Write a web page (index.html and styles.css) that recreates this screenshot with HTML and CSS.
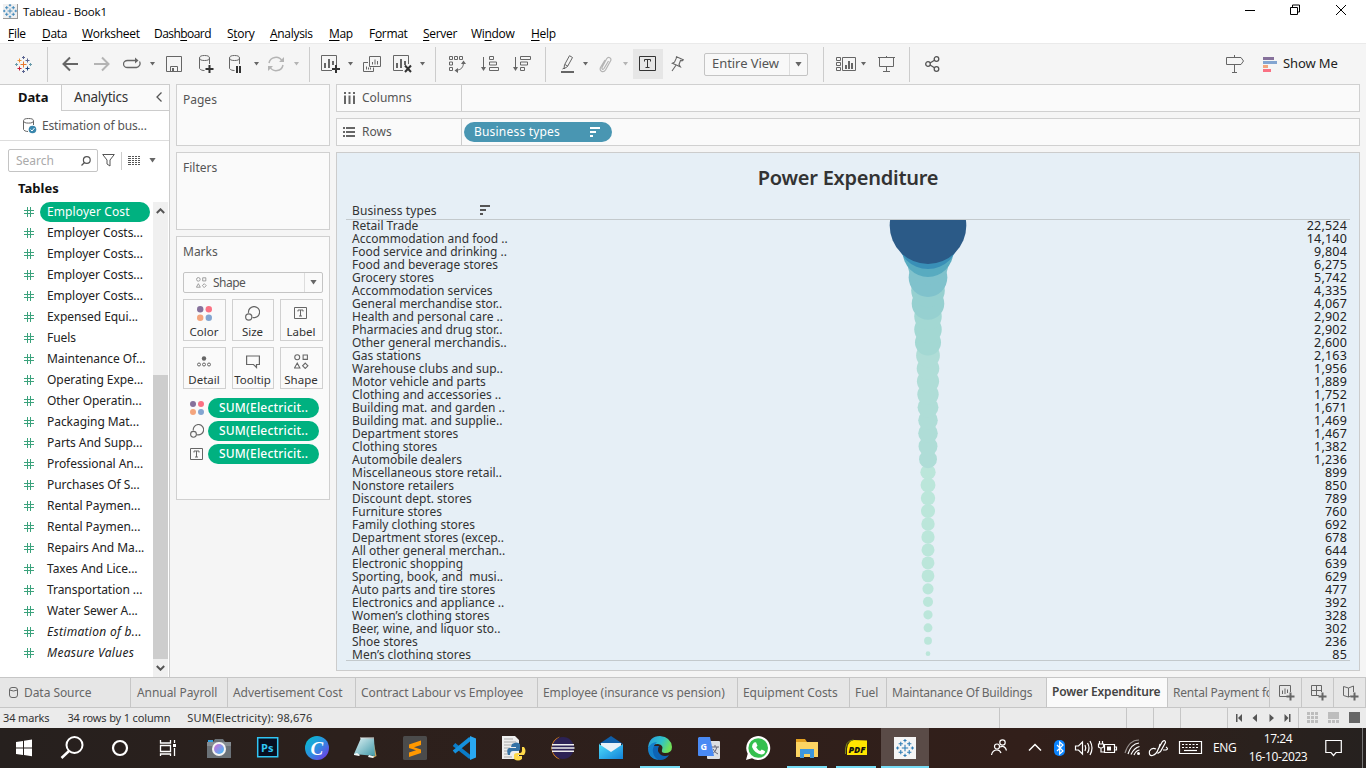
FILE: index.html
```html
<!DOCTYPE html>
<html lang="en">
<head>
<meta charset="utf-8">
<title>Tableau - Book1</title>
<link rel="stylesheet" href="styles.css">
</head>
<body>
<svg class="defs" width="0" height="0">
  <defs>
    <symbol id="caret" viewBox="0 0 5 4"><path d="M0 0h5L2.500 3.500z" fill="currentColor"/></symbol>
    <symbol id="hash" viewBox="0 0 10 10"><path d="M3.500 0v10M6.500 0v10M0 3.500h10M0 6.500h10" stroke="#3ba27c" fill="none"/></symbol>
    <symbol id="dots" viewBox="0 0 14 14"><circle cx="3" cy="3" r="3" fill="#86719b"/><circle cx="11" cy="3" r="3" fill="#fa7183"/><circle cx="3" cy="11" r="3" fill="#f4a57d"/><circle cx="11" cy="11" r="3" fill="#83a5d1"/></symbol>
    <symbol id="size" viewBox="0 0 14 14"><path d="M3.300 6.500A5.200 5.200 0 1 1 7 10.700" fill="none" stroke="#666" stroke-width="1.100"/><circle cx="3.500" cy="10.300" r="2.900" fill="none" stroke="#666" stroke-width="1.100"/></symbol>
    <symbol id="tbox" viewBox="0 0 14 13"><path d="M.5.5h12v11H.5zM4 4.500V3h5v1.500M6.500 3v6M5 9h3" fill="none" stroke="#666"/></symbol>
    <symbol id="shapes" viewBox="0 0 14 14"><circle cx="3" cy="3" r="2.300"/><path d="M8.500 1h4v4h-4zM3 8.500l2.500 4.500h-5zM10.500 8.500l2.500 2.500-2.500 2.500L8 11z"/></symbol>
    <symbol id="logo" viewBox="0 0 17 17"><g fill="none"><path d="M8.500 5.500v6M5.500 8.500h6" stroke="var(--a)"/><path d="M4.500 2.500v4M2.500 4.500h4" stroke="var(--b)"/><path d="M12.500 2.500v4M10.500 4.500h4" stroke="var(--c)"/><path d="M4.500 10.500v4M2.500 12.500h4" stroke="var(--d)"/><path d="M12.500 10.500v4M10.500 12.500h4" stroke="var(--e)"/><path d="M8.500 0v3M7 1.500h3M8.500 14v3M7 15.500h3" stroke="var(--c)"/><path d="M1.500 7v3M0 8.500h3M15.500 7v3M14 8.500h3" stroke="var(--f)"/></g></symbol>
    <symbol id="sortdesc" viewBox="0 0 10 10"><path d="M0 1h10M0 5h6M0 9h3" stroke="currentColor" stroke-width="2"/></symbol>
    <linearGradient id="gcanva" x1="0" y1="0" x2="1" y2="1"><stop offset="0" stop-color="#00c4cc"/><stop offset=".5" stop-color="#2d8fe0"/><stop offset="1" stop-color="#7d2ae8"/></linearGradient>
    <linearGradient id="gcam" x1="0" y1="0" x2="1" y2="1"><stop offset="0" stop-color="#d66ad8"/><stop offset="1" stop-color="#39c0f5"/></linearGradient>
    <linearGradient id="gedge" x1="0" y1="0" x2="1" y2=".4"><stop offset="0" stop-color="#2a9be0"/><stop offset=".6" stop-color="#2fc2c9"/><stop offset="1" stop-color="#6fe05a"/></linearGradient>
    <linearGradient id="gmail" x1="0" y1="0" x2="1" y2="1"><stop offset="0" stop-color="#4fdcfa"/><stop offset="1" stop-color="#1283d9"/></linearGradient>
    <linearGradient id="gnote" x1="0" y1="0" x2="1" y2="1"><stop offset="0" stop-color="#dff3f5"/><stop offset="1" stop-color="#3f98a8"/></linearGradient>
  </defs>
</svg>

<header class="titlebar">
  <span class="app-icon"><svg class="logo blue" width="14" height="14"><use href="#logo"/></svg></span>
  <span class="app-title">Tableau - Book1</span>
  <svg class="winbtns" width="116" height="20" viewBox="0 0 116 20" fill="none" stroke="#000"><path d="M0 10.500h10M45.500 7.500h7v7h-7zM47.500 7v-2h7v7H53M91 5l10 10M101 5L91 15"/></svg>
</header>

<nav class="menubar">
  <span class="m1"><u>F</u>ile</span><span class="m2"><u>D</u>ata</span><span class="m3"><u>W</u>orksheet</span><span class="m4">Dash<u>b</u>oard</span><span class="m5">S<u>t</u>ory</span><span class="m6"><u>A</u>nalysis</span><span class="m7"><u>M</u>ap</span><span class="m8">F<u>o</u>rmat</span><span class="m9"><u>S</u>erver</span><span class="m10">Wi<u>n</u>dow</span><span class="m11"><u>H</u>elp</span>
</nav>

<div class="toolbar">
  <div class="group g-logo"><svg class="logo multi" width="17" height="17"><use href="#logo"/></svg></div>
  <div class="group g-edit">
    <svg width="16" height="16" fill="none" stroke="#666" stroke-width="2"><path d="M16 8H1.500M8 1.500L1.500 8 8 14.500"/></svg>
    <svg class="s16" width="16" height="16" fill="none" stroke="#b4b4b4" stroke-width="2"><path d="M0 8h14.500M8 1.500L14.500 8 8 14.500"/></svg>
    <svg class="s13" width="18" height="16" fill="none" stroke="#666" stroke-width="1.300"><path d="M12.500 4.500H4.500a4 3.500 0 0 0 0 7h9a4 4 0 0 0 3-6"/><path d="M12 1.500l3.500 3-3.500 3z" fill="#666" stroke="none"/></svg>
    <svg class="caret s9" width="5" height="4"><use href="#caret"/></svg>
    <svg class="s11" width="16" height="16" fill="none" stroke="#666"><path d="M.5.5h15v15H.500zM4.500 15v-4.500h7v4.500"/><path d="M6 12h2v3H6z" fill="#666" stroke="none"/></svg>
    <svg class="s17" width="15" height="18" fill="none" stroke="#666"><path d="M.5 3v10.500c1 1.500 3 2 5 2M10.500 3v6"/><ellipse cx="5.500" cy="3" rx="5" ry="2.500"/><path d="M10.500 10v8M6.500 14h8" stroke="#333" stroke-width="2"/></svg>
    <svg class="s15" width="14" height="18" fill="none" stroke="#666"><path d="M.5 3v10.500c1 1.500 3 2 5 2M10.500 3v6"/><ellipse cx="5.500" cy="3" rx="5" ry="2.500"/><path d="M8 11v7M11 11v7" stroke="#333" stroke-width="2"/></svg>
    <svg class="caret s11" width="5" height="4"><use href="#caret"/></svg>
    <svg class="s8" width="18" height="16" fill="none" stroke="#b4b4b4" stroke-width="1.500"><path d="M2 7a7 7 0 0 1 13-2M16 9a7 7 0 0 1-13 2"/><path d="M12 6h5V1zM6 10H1v5z" fill="#b4b4b4" stroke="none"/></svg>
    <svg class="caret dim s9" width="5" height="4"><use href="#caret"/></svg>
  </div>
  <div class="group g-sheet">
    <svg width="19" height="18" fill="none" stroke="#666"><path d="M11 15.500H.5V.5h15V10"/><path d="M4 13V8M8 13V4M12 10V6" stroke-width="2"/><path d="M15 10v8M11 14h8" stroke="#333" stroke-width="2"/></svg>
    <svg class="caret s8" width="5" height="4"><use href="#caret"/></svg>
    <svg class="s10" width="18" height="17" fill="none" stroke="#666"><path d="M6.500.5h11v10h-11zM5 6.500H.5v9h10v-4M9.500 8.500V6M12 8.500V3.500M14.500 8.500V5M3.500 13.500v-3M5.500 13.500v-2M7.500 13.500v-2"/></svg>
    <svg class="s12" width="20" height="18" fill="none" stroke="#666"><path d="M10 15.500H.5V.5h15V9"/><path d="M4 13V8M8 13V4M12 10V6" stroke-width="2"/><path d="M12 10.500l6 6.500M18 10.500L12 17" stroke="#333" stroke-width="2"/></svg>
    <svg class="caret s7" width="5" height="4"><use href="#caret"/></svg>
  </div>
  <div class="group g-sort">
    <svg width="18" height="17" fill="none" stroke="#666"><path d="M.5.5h3v3h-3zM5.500.5h3v3h-3zM10.500.5h3v3h-3zM.5 6h3v3h-3zM.5 11.500h3v3h-3zM14.500 6c0 5-2 8-7 8"/><path d="M12 8l2.500-3.500L17 8zM9 12l-3.500 2.500L9 17z" fill="#666" stroke="none"/></svg>
    <svg class="s14" width="19" height="16" fill="none" stroke="#666"><path d="M2.500 1v12M8.500.5h4v3h-4zM8.500 6h7v3h-7zM8.500 11.500h9v3h-9z"/><path d="M0 11l2.500 4L5 11z" fill="#666" stroke="none"/></svg>
    <svg class="s13" width="19" height="16" fill="none" stroke="#666"><path d="M2.500 1v12M7.500.5h10v3h-10zM7.500 6h7v3h-7zM7.500 11.500h4v3h-4z"/><path d="M0 11l2.500 4L5 11z" fill="#666" stroke="none"/></svg>
  </div>
  <div class="group g-mark">
    <svg width="14" height="18" fill="none" stroke="#666"><path d="M0 17h13" stroke-width="2"/><path d="M8.500.7l3 1.800-5 9-3.500 2.300.5-4zM4 9.500l3 1.800M1.500 14l2-1"/></svg>
    <svg class="caret s8" width="5" height="4"><use href="#caret"/></svg>
    <svg class="s11" width="13" height="17" fill="none" stroke="#b4b4b4" stroke-width="1.200"><path d="M9.500 5L5 12.500c-1 1.500-2.500.500-2-1L7.500 3c2-3 5.500-1 4 2L6.500 14c-2 3-6.500 1.500-5-2.500L6 4"/></svg>
    <svg class="caret dim s11" width="5" height="4"><use href="#caret"/></svg>
    <span class="tbtn"><svg width="18" height="16" fill="none" stroke="#333"><path d="M.5.500h16v14H.500z"/><path d="M5.500 5.500v-2h6v2M8.500 3.500v8M6.500 11.500h4"/></svg></span>
    <svg class="s8" width="13" height="16" fill="none" stroke="#666" stroke-width="1.100"><path d="M5.500.8l6.800 3-1.300 1-1.500-.300-1.500 4 1.300 2.200-8-3.500 2.200-1 1.800-4zM4.800 9.500L1 15"/></svg>
    <div class="combo"><span>Entire View</span><i><svg class="caret" width="7" height="5"><use href="#caret"/></svg></i></div>
  </div>
  <div class="group g-cards">
    <svg width="20" height="15" fill="none" stroke="#666"><path d="M.5.5h4v3h-4zM.5 5.500h4v3h-4zM.5 10.500h4v3h-4zM6.500.5h13v13h-13z"/><path d="M10 12V8M13 12V4M16 12V6" stroke-width="2"/></svg>
    <svg class="caret s5" width="5" height="4"><use href="#caret"/></svg>
    <svg class="s12" width="17" height="16" fill="none" stroke="#666"><path d="M0 1.500h17M1.500 2v8.500h14V2M8.500 0v1M8.500 11v4M5 15.500h7"/></svg>
  </div>
  <div class="group g-share"><svg width="15" height="16" fill="none" stroke="#555" stroke-width="1.300"><circle cx="3" cy="8" r="2.300"/><circle cx="11.500" cy="3" r="2.300"/><circle cx="11.500" cy="13" r="2.300"/><path d="M5 7l4.500-2.700M5 9l4.500 2.700"/></svg></div>
  <div class="group g-show">
    <svg width="19" height="18" fill="none" stroke="#666"><path d="M.5 2.500h14.500l2.500 3.500-2.500 3.500H.5zM8.500 0v2M8.500 10v7M6 17.500h5"/></svg>
    <svg class="bars" width="15" height="15"><path fill="#86719b" d="M0 0h11v3H0z"/><path fill="#83a5d1" d="M0 4h14v3H0z"/><path fill="#f4a57d" d="M0 8h5v3H0z"/><path fill="#fa7183" d="M0 12h8v3H0z"/></svg>
    <span>Show Me</span>
  </div>
</div>

<main class="work">
  <aside class="data">
    <div class="dtabs"><span class="dt on">Data</span><span class="dt">Analytics<svg width="6" height="10" fill="none" stroke="#555" stroke-width="1.300"><path d="M5.500.5L1 5l4.500 4.500"/></svg></span></div>
    <div class="source"><svg width="14" height="16" fill="none" stroke="#666"><path d="M.5 3v8.500c.5 1 2 2 4.500 2M10.500 3v4"/><ellipse cx="5.500" cy="2.800" rx="5" ry="2.300"/><circle cx="9.500" cy="11.500" r="3.800" fill="#3a87ad" stroke="none"/><path d="M7.500 11.500l1.500 1.500 2.500-3" stroke="#fff"/></svg><span>Estimation of bus...</span></div>
    <div class="searchrow">
      <div class="search"><span>Search</span><svg width="10" height="10" fill="none" stroke="#555" stroke-width="1.200"><circle cx="5.800" cy="4" r="3.400"/><path d="M3.500 6.500L.5 9.500"/></svg></div>
      <svg class="funnel" width="13" height="13" fill="none" stroke="#555"><path d="M.7.5h11.600L8 6v6l-3-2V6z"/></svg>
      <svg class="listic" width="19" height="18" fill="none" stroke="#555"><path d="M.5 0v18" stroke="#ccc"/><path d="M7 4.500h12M7 6.500h12M7 8.500h12M7 10.500h12M7 12.500h12" stroke-dasharray="3 1 2 1 2 1 2 0"/></svg>
      <svg class="caret" width="7" height="5"><use href="#caret"/></svg>
    </div>
    <h2>Tables</h2>
    <div class="fieldwrap">
      <ul class="fields" id="fields"></ul>
      <div class="scroll"><svg width="9" height="6" fill="none" stroke="#555" stroke-width="2"><path d="M.8 5L4.500 1.300 8.200 5"/></svg><div class="thumb"></div><svg width="9" height="6" fill="none" stroke="#555" stroke-width="2"><path d="M.8 1L4.500 4.700 8.200 1"/></svg></div>
    </div>
  </aside>

  <section class="cards">
    <div class="card pages">Pages</div>
    <div class="card filters">Filters</div>
    <div class="card marks">
      <div>Marks</div>
      <div class="marktype"><svg width="11" height="11" fill="none" stroke="#888"><use href="#shapes"/></svg><span>Shape</span><i><svg class="caret" width="7" height="5"><use href="#caret"/></svg></i></div>
      <div class="markgrid">
        <div><svg width="15" height="15"><use href="#dots"/></svg>Color</div>
        <div><svg width="15" height="15"><use href="#size"/></svg>Size</div>
        <div><svg width="14" height="15"><use href="#tbox"/></svg>Label</div>
        <div><svg width="14" height="15" fill="none" stroke="#666"><circle cx="7" cy="4.500" r="2.200" fill="#666" stroke="none"/><circle cx="2" cy="10.500" r="1.500"/><circle cx="7" cy="10.500" r="1.500"/><circle cx="12" cy="10.500" r="1.500"/></svg>Detail</div>
        <div><svg width="14" height="15" fill="none" stroke="#666" stroke-width="1.200"><path d="M.6 2h12.800v8.500h-2.900V13.500l-3-3H.6z"/></svg>Tooltip</div>
        <div><svg width="15" height="15" fill="none" stroke="#666"><use href="#shapes"/></svg>Shape</div>
      </div>
      <div class="pillrow"><svg width="14" height="14"><use href="#dots"/></svg><span class="pill">SUM(Electricit..</span></div>
      <div class="pillrow"><svg width="14" height="14"><use href="#size"/></svg><span class="pill">SUM(Electricit..</span></div>
      <div class="pillrow"><svg width="14" height="13"><use href="#tbox"/></svg><span class="pill">SUM(Electricit..</span></div>
    </div>
  </section>

  <section class="sheet">
    <div class="shelf"><div class="label"><svg width="11" height="12" fill="#666"><path d="M0 0h2v2H0zM0 3.500h2V12H0zM4.500 0h2v2h-2zM4.500 3.500h2V12h-2zM9 0h2v2H9zM9 3.500h2V12H9z"/></svg><span>Columns</span></div></div>
    <div class="shelf"><div class="label"><svg width="12" height="10" fill="#666"><path d="M0 0h2v2H0zM3 0h9v2H3zM0 4h2v2H0zM3 4h9v2H3zM0 8h2v2H0zM3 8h9v2H3z"/></svg><span>Rows</span></div><div class="rowpill"><span>Business types</span><svg width="10" height="10"><use href="#sortdesc"/></svg></div></div>
    <div class="view">
      <h1>Power Expenditure</h1>
      <div class="colhead"><span>Business types</span><svg width="10" height="10"><use href="#sortdesc"/></svg></div>
      <div class="plot">
        <div class="names" id="names"></div>
        <svg class="bubbles" id="bubbles" width="100" height="440"></svg>
        <div class="values" id="values"></div>
      </div>
    </div>
  </section>
</main>

<nav class="tabs">
  <span class="t1"><svg width="9" height="11" fill="none" stroke="#666"><rect x=".5" y=".5" width="8" height="10" rx="2.500"/><path d="M.5 3q4 2 8 0"/></svg>Data Source</span><span class="t2">Annual Payroll</span><span class="t3">Advertisement Cost</span><span class="t4">Contract Labour vs Employee</span><span class="t5">Employee (insurance vs pension)</span><span class="t6">Equipment Costs</span><span class="t7">Fuel</span><span class="t8">Maintanance Of Buildings</span><span class="t9 on">Power Expenditure</span><span class="t10">Rental Payment for</span>
  <span class="tn"><svg width="16" height="16" fill="none" stroke="#666"><path d="M8 11.500H.500V.5h11V7M3.500 9V5.500M6 9V3.500M8.500 8V4.500"/><path d="M11.500 7.500v8M7.500 11.500h8" stroke-width="2"/></svg></span><span class="tn"><svg width="16" height="16" fill="none" stroke="#666"><path d="M8 10.500H.500V.5h10V7M5.500.5v10M.5 5.500h10"/><path d="M11.500 7.500v8M7.500 11.500h8" stroke-width="2"/></svg></span><span class="tn"><svg width="16" height="16" fill="none" stroke="#666"><path d="M8 11L5.500 12 .5 10.500v-9l5 1.500 5-2V7M5.500 3v9"/><path d="M11.500 7.500v8M7.500 11.500h8" stroke-width="2"/></svg></span>
</nav>

<footer class="status">
  <span>34 marks</span><span>34 rows by 1 column</span><span class="sum">SUM(Electricity): 98,676</span>
  <div class="cells"><b></b><b></b><b></b><b></b>
    <b class="nav"><svg width="56" height="8" fill="#555"><path d="M1 0h1.500v8H1zM7 0v8L3 4zM22 0v8l-4.500-4zM34.500 0v8L39 4zM49.500 0v8l4-4zM54 0h1.500v8H54z"/></svg></b>
    <b class="modes"><svg width="54" height="12"><path fill="#bdbdbd" d="M0 0h3v3H0zM4 0h3v3H4zM8 0h3v3H8zM0 4h3v3H0zM4 4h3v3H4zM8 4h3v3H8zM0 8h3v3H0zM4 8h3v3H4zM8 8h3v3H8zM21 0h11v7H21zM21 8h3v3h-3zM25 8h3v3h-3zM29 8h3v3h-3z"/><path fill="#666" d="M42 0h11v11H42z"/></svg></b>
  </div>
</footer>

<footer class="taskbar">
  <div class="apps">
    <svg viewBox="0 0 49 40"><path fill="#fff" d="M16 14l7-1v6.500h-7zM24 12.800l8-1.200v7.900h-8zM16 20.500h7V27l-7-1zM24 20.500h8V28.200l-8-1.200z"/></svg>
    <svg viewBox="0 0 49 40" fill="none" stroke="#fff" stroke-width="2"><circle cx="25.500" cy="17" r="8"/><path d="M20 23l-7.500 7" stroke-width="2.500"/></svg>
    <svg viewBox="0 0 49 40" fill="none" stroke="#fff" stroke-width="2.200"><circle cx="22" cy="20" r="7"/></svg>
    <svg viewBox="0 0 49 40" fill="none" stroke="#fff" stroke-width="1.300"><path d="M13.500 12v3h10v-3M13.500 17.500h10v6h-10zM13.500 28v-2h10v2M27.500 12v3M27.500 20v8"/><path d="M26 16h3v3h-3z" fill="#fff" stroke="none"/></svg>
    <svg viewBox="0 0 49 40"><path fill="#2f9fe0" d="M12 12h5v3h-5z"/><path fill="#6b7278" d="M11 14h6l2-3h8l2 3h6v16H11z"/><path fill="#858c92" d="M11 14h24v4H11z"/><circle cx="23" cy="21" r="7" fill="#f4f4f4"/><circle cx="23" cy="21" r="5" fill="url(#gcam)"/></svg>
    <svg viewBox="0 0 49 40"><path fill="#070e20" stroke="#31c5f4" stroke-width="1.500" d="M12.700 9.700h20v19h-20z"/><text class="ps" x="16" y="23.500">Ps</text></svg>
    <svg viewBox="0 0 49 40"><circle cx="23" cy="20" r="12" fill="url(#gcanva)"/><text class="canva" x="16.500" y="26.500">C</text></svg>
    <svg viewBox="0 0 49 40"><path fill="#c9a25c" d="M30 11l3.500 17-3.500 2z"/><path fill="url(#gnote)" d="M18 10l13 .5 1 17.500-21-2z"/><path fill="#f2fafa" d="M11 26l3-1 3 2-1 1-5-1zM26 27l5 1.500-1 1.500-5-1z"/><path d="M17.500 10h13" stroke="#e8f0f0" stroke-width="2" stroke-dasharray="1 1"/></svg>
    <svg viewBox="0 0 49 40"><rect x="11" y="8" width="24" height="24" rx="1.500" fill="#4b4b4b"/><path fill="#ff9800" d="M17 16.500l12-4v4.500l-7 2.200 7 2.200v3.500l-12 4v-4.500l7-2.200-7-2.200z"/></svg>
    <svg viewBox="0 0 49 40"><path fill="none" stroke="#0a7cc8" stroke-width="4" d="M13 16.500l16.500 13"/><path fill="none" stroke="#1590dc" stroke-width="4" d="M13 24l16.500-13.500"/><path fill="#29a8f2" d="M29 8l6 2.500v19L29 32z"/></svg>
    <svg viewBox="0 0 49 40"><path fill="#eee" d="M12 8h13l4 4v19H12z"/><path d="M14 11h9M14 14h12M14 17h12M14 20h6M14 23h5M14 26h6M14 29h8" stroke="#aaa"/><path fill="#3572a5" d="M22 16q5-3 8 0v5q0 2-3 2h-4q-3 0-3 4h-2q-2-6 1-7h7v-1h-5z"/><path fill="#ffd94a" d="M32 19h2q3 4 0 8h-6v1h4v3q-4 3-8 0v-4q0-2 3-2h3q2 0 2-3z"/></svg>
    <svg viewBox="0 0 49 40"><path fill="#f7941e" d="M21 8.500a12 12 0 0 0 0 23 14 14 0 0 1 0-23z"/><circle cx="24" cy="20" r="11" fill="#2c2255"/><path stroke="#eee" stroke-width="1.600" d="M13 16.800h22M12.500 20h23M13 23.200h22"/></svg>
    <svg viewBox="0 0 49 40"><path fill="#0f5ea8" d="M11 16l12-8 12 8z"/><path fill="#e9f1f8" d="M13 15h20v9H13z"/><path fill="url(#gmail)" d="M11 16l12 8 12-8v15H11z"/></svg>
    <svg viewBox="0 0 49 40"><path fill="#0d64b5" d="M12 18q-2 13 11 14 6 0 9-5-4 2-8 0-5-4-2-9z"/><path fill="url(#gedge)" d="M11 20Q12 8 23 8q11 1 12 11 0 6-7 6-4 0-3-3 2-5-4-6-7 0-10 4z"/><path fill="#1582cc" d="M11 20q3-6 9-6-5 5-4 10 1 6 6 8-11-1-11-12z"/><path class="run" d="M3 38h40v2H3z"/></svg>
    <svg viewBox="0 0 49 40"><rect x="21" y="13" width="13" height="18" rx="1" fill="#dcdfe3"/><path d="M25 19h8M29 17v2M31 19q-1 5-5 7M27 21q2 4 5 5" stroke="#667" fill="none"/><path fill="#4a8af4" d="M13 9h11l4 19H13q-1 0-1-1V10z"/><text class="gt" x="14.500" y="22">G</text></svg>
    <svg viewBox="0 0 49 40"><path fill="#fff" d="M11 32l1.700-6.200A12 12 0 1 1 17 30.300z"/><circle cx="23.200" cy="20" r="9.800" fill="#35c04f"/><path fill="#fff" d="M19 14.500l2-.3 1.500 3.500-1.300 1.600q1.500 2.700 4 3.800l1.600-1.600 3.200 1.700q0 3-3.500 3.300-6.500-.5-9.500-7.500 0-3 2-4.500z"/></svg>
    <svg viewBox="0 0 49 40"><path fill="#e2a020" d="M12 11h9l2 3h11v4H12z"/><path fill="#fcd462" d="M12 14h22v15H12z"/><path fill="#3d97dd" d="M16 21h14v9h-4v-4h-6v4h-4z"/><path class="run" d="M3 38h40v2H3z"/></svg>
    <svg viewBox="0 0 49 40"><path fill="#ffe600" d="M14 27q-1-13 6-15l14 .5V27z"/><path d="M12.500 26q-1-14 8-14" fill="none" stroke="#7a8a10"/><text class="pdf" x="15.500" y="24.500">PDF</text><path class="run" d="M3 38h40v2H3z"/></svg>
    <svg viewBox="0 0 49 40"><path fill="#5a4b47" d="M-1 0h48v40H-1z"/><path fill="#f5f5f5" d="M12 9h22v22H12z"/><svg class="logo blue" x="14" y="11" width="18" height="18"><use href="#logo"/></svg><path class="run" d="M-1 38h48v2H-1z"/></svg>
  </div>
  <svg class="tray" width="230" height="40" fill="none" stroke="#fff" stroke-width="1.200">
    <circle cx="13.500" cy="14.500" r="2.700"/><circle cx="8" cy="18.500" r="2.500"/><path d="M2.500 27q1-5 5.500-5 3 0 4 3M11 19q5-2 6.500 3.500"/>
    <g transform="translate(-6 0)">
      <path d="M46 22.500l6-6 6 6" stroke-width="1.500"/>
      <rect x="71" y="12" width="11" height="16" rx="5" fill="#0a84ff" stroke="none"/><path d="M74 17l6 6-3.300 3V14l3.300 3-6 6"/>
      <path d="M92.500 18h3l4-4v12l-4-4h-3zM102 17q1.500 3 0 6M104.500 15q3 5 0 10M107 13q4 7 0 14"/>
      <path d="M121.500 16.500h10v8h-10zM132 19h1.500v3H132M116.500 13v3M119.500 13v3M115.500 16h5v3q-2.500 2-5 0zM118 20v4h3"/><path d="M124 18.500h4v4h-4z" fill="#fff" stroke="none"/>
      <path d="M145 26Q148 16 156 15M148 26.500Q151 20 156.500 18.500M151 27q2-4.500 5.500-5"/><path d="M142 25Q146 12 156 12" opacity=".5"/><circle cx="155.500" cy="25.500" r="1.500" fill="#fff" stroke="none"/>
    </g>
    <path d="M167 21q-4-2-6.500 2-1 5 3 4.500 4-1 6-7l4-7q3-2 3 1l-5 9-3 2M171 16l-1 4M174 22h3q3-1 0-3"/>
    <g transform="translate(-7 0)">
      <path d="M197.500 13.500h22v12h-22z"/><path d="M200 16.500h17M200 19.500h17" stroke-dasharray="2 1.500"/><path d="M202 22.500h13"/>
    </g>
  </svg>
  <span class="eng">ENG</span>
  <div class="clock"><span>17:24</span><span>16-10-2023</span></div>
  <svg class="notif" width="40" height="40" fill="none" stroke="#fff" stroke-width="1.200"><path d="M.8 12.500h15.500v12H11l-2.500 3-2.500-3H.800z"/><path d="M37.500 0v40" stroke="#777" stroke-width="1"/></svg>
</footer>
<script src="app.js"></script>
</body>
</html>
```
FILE: styles.css
```css
* { box-sizing: border-box; }
body { margin: 0; width: 1366px; height: 768px; overflow: hidden; display: flex; flex-direction: column; background: #f5f5f5; font-family: "Noto Sans", "Open Sans", sans-serif; font-size: 12px; color: #333; }
svg { display: block; flex: none; }
.defs { position: absolute; }
u { text-underline-offset: 2px; text-decoration-thickness: 1px; }
.caret { color: #666; }
.caret.dim { color: #b4b4b4; }
.blue { --a: #2d7cb5; --b: #2d7cb5; --c: #2d7cb5; --d: #2d7cb5; --e: #2d7cb5; --f: #2d7cb5; }
.multi { --a: #e8762d; --b: #eb9338; --c: #5c6692; --d: #c72037; --e: #1f447e; --f: #6a9cab; }

.titlebar { height: 22px; background: #fff; display: flex; align-items: center; color: #000; font-family: "Open Sans", sans-serif; flex: none; }
.app-icon { margin-left: 3px; width: 15px; height: 15px; background: #f0f0f0; border-right: 1px solid #999; border-bottom: 1px solid #999; }
.app-title { margin-left: 5px; font-size: 11.5px; letter-spacing: -.15px; }
.winbtns { margin: -2px 5px 0 auto; }

.menubar { height: 21px; flex: none; background: #fff; display: flex; align-items: center; color: #000; font-family: "Open Sans", sans-serif; font-size: 12px; letter-spacing: -.3px; padding: 2px 0 0 8px; white-space: nowrap; }
.m1 { width: 34px; } .m2 { width: 40px; } .m3 { width: 72px; } .m4 { width: 73px; letter-spacing: -.55px; } .m5 { width: 43px; } .m6 { width: 59px; } .m7 { width: 40px; } .m8 { width: 54px; } .m9 { width: 48px; } .m10 { width: 60px; }

.toolbar { height: 41px; flex: none; border-top: 1px solid #eaeaea; display: flex; align-items: center; }
.group { display: flex; align-items: center; height: 35px; border-left: 1px solid #ccc; }
.g-logo { border: 0; width: 47px; padding-left: 15px; }
.g-edit { width: 262px; padding-left: 14px; }
.g-sheet { width: 126px; padding-left: 11px; }
.g-sort { width: 110px; padding-left: 13px; }
.g-mark { width: 278px; padding-left: 15px; }
.g-cards { width: 86px; padding-left: 12px; }
.g-share { padding-left: 15px; }
.g-show { border: 0; margin-left: auto; padding-right: 28px; font-size: 13px; color: #222; }
.g-show span { margin: -2px 0 0 5px; width: 55px; letter-spacing: -.1px; white-space: nowrap; }
.bars { margin-left: 18px; }
.s5 { margin-left: 5px; } .s7 { margin-left: 7px; } .s8 { margin-left: 8px; } .s9 { margin-left: 9px; } .s10 { margin-left: 10px; } .s11 { margin-left: 11px; } .s12 { margin-left: 12px; } .s13 { margin-left: 13px; } .s14 { margin-left: 14px; } .s15 { margin-left: 15px; } .s16 { margin-left: 16px; } .s17 { margin-left: 17px; }
.tbtn { width: 30px; height: 30px; margin-left: 5px; padding: 7px 6px; background: #e6e6e6; }
.combo { margin-left: 20px; width: 104px; height: 23px; border: 1px solid #c4c4c4; border-radius: 2px; display: flex; align-items: center; font-size: 13px; color: #555; background: #f8f8f8; }
.combo span { flex: 1; margin-top: -2px; padding-left: 7px; white-space: nowrap; letter-spacing: -.05px; }
.combo i, .marktype i { width: 18px; height: 100%; border-left: 1px solid #ddd; display: grid; place-items: center; }

.work { height: 593px; flex: none; display: flex; }
.data { width: 170px; border-right: 1px solid #ccc; border-top: 1px solid #ccc; background: #fff; display: flex; flex-direction: column; }
.dtabs { display: flex; height: 26px; flex: none; }
.dt { display: flex; align-items: center; background: #fafafa; border-left: 1px solid #ccc; border-bottom: 1px solid #ccc; flex: 1; padding: 0 7px 1px 12px; font-size: 13.500px; line-height: 22px; letter-spacing: -.25px; color: #333; justify-content: space-between; }
.dt.on { flex: none; width: 61px; padding: 0 0 1px 18px; font-weight: 700; font-size: 13px; color: #111; background: #fff; border-color: transparent; border-left: 0; letter-spacing: -.1px; }
.source { height: 30px; flex: none; border-bottom: 1px solid #ddd; display: flex; align-items: center; padding-left: 23px; color: #555; white-space: nowrap; }
.source span { margin: -1px 0 0 5px; letter-spacing: -.15px; }
.searchrow { display: flex; align-items: center; margin: 8px 0 0 8px; height: 23px; flex: none; }
.search { width: 90px; height: 23px; border: 1px solid #c4c4c4; border-radius: 2px; display: flex; align-items: center; justify-content: space-between; padding: 0 6px 0 7px; color: #aaa; }
.funnel { margin-left: 4px; }
.listic { margin: 0 9px 0 6px; }
.data h2 { margin: 7px 0 0 18px; font-size: 13px; line-height: 18px; color: #111; flex: none; letter-spacing: .05px; }
.fieldwrap { flex: 1; display: flex; justify-content: space-between; margin-top: 5px; min-height: 0; }
.fields { list-style: none; margin: -1px 0 0; padding: 0 0 0 24px; }
.fields li { display: flex; align-items: center; height: 21px; white-space: nowrap; color: #222; letter-spacing: -.05px; }
.fields li span { margin-left: 6px; padding-left: 7px; line-height: 20px; height: 20px; width: 110px; }
.fields li.sel span { background: #00b180; color: #fff; border-radius: 10px; letter-spacing: .1px; }
.fields li.it span { font-style: italic; letter-spacing: .3px; }
.scroll { width: 15px; margin-right: 1px; background: #f0f0f0; display: flex; flex-direction: column; align-items: center; padding: 6px 0; }
.thumb { width: 15px; height: 284px; background: #cdcdcd; margin: auto 0 6px; }

.cards { width: 154px; margin-left: 6px; flex: none; color: #555; }
.card { background: #fafafa; border: 1px solid #d0d0d0; padding: 6px 6px; line-height: 17px; letter-spacing: 0; }
.pages { height: 62px; margin-bottom: 6px; }
.filters { height: 78px; margin-bottom: 6px; }
.marks { height: 264px; }
.marktype { display: flex; align-items: center; height: 21px; border: 1px solid #c4c4c4; border-radius: 2px; margin-top: 12px; padding-left: 12px; }
.marktype span { flex: 1; margin-left: 6px; letter-spacing: -.5px; }
.markgrid { display: grid; grid-template-columns: 43px 42px 43px; gap: 6px; margin: 6px 0 9px; width: 140px; }
.markgrid div { height: 42px; border: 1px solid #d0d0d0; display: flex; flex-direction: column; align-items: center; padding: 6px 1px 0 0; font-size: 11.500px; line-height: 14px; letter-spacing: 0; color: #333; gap: 4px; }
.pillrow { display: flex; align-items: center; height: 20px; margin-bottom: 3px; padding-left: 7px; }
.pill { margin-left: 4px; width: 111px; height: 20px; line-height: 20px; border-radius: 10px; background: #00b180; color: #fff; padding-left: 11px; letter-spacing: .2px; font-weight: 500; white-space: nowrap; }

.sheet { width: 1024px; margin-left: 6px; flex: none; }
.shelf { height: 28px; border: 1px solid #d0d0d0; background: #fafafa; margin-bottom: 6px; display: flex; align-items: center; }
.label { width: 125px; height: 100%; border-right: 1px solid #ccc; display: flex; align-items: center; padding: 0 0 1px 6px; color: #555; letter-spacing: 0; }
.label span { margin-left: 7px; margin-top: -1px; }
.shelf:first-child .label { padding-left: 7px; }
.rowpill { margin-left: 2px; width: 148px; height: 20px; border-radius: 10px; background: #4996b2; color: #fff; display: flex; align-items: center; justify-content: space-between; padding: 0 12px 0 10px; }
.rowpill span { margin-top: -2px; letter-spacing: .2px; }
.view { height: 519px; border: 1px solid #ccc; background: #e6eff6; padding: 0 9px; }
.view h1 { margin: 0; padding: 8px 0 0; height: 49px; text-align: center; font-size: 20px; line-height: 34px; font-weight: 600; color: #333; font-family: "Noto Sans", sans-serif; letter-spacing: -.25px; }
.colhead { display: flex; align-items: center; height: 18px; border-bottom: 1px solid #c3c9cc; padding: 0 0 1px 6px; color: #333; }
.colhead span { width: 128px; letter-spacing: .1px; }
.colhead svg { color: #555; }
.plot { height: 441px; display: flex; border-bottom: 1px solid #c3c9cc; overflow: hidden; }
.names { width: 532px; padding-left: 6px; color: #333; }
.names, .values { margin-top: -1px; }
.names div, .values div { height: 13px; line-height: 13px; white-space: nowrap; }
.names div { white-space: pre; }
.bubbles { overflow: hidden; }
.values { flex: 1; text-align: right; padding-right: 3px; font-size: 12.500px; letter-spacing: .2px; color: #222; }

.tabs { height: 31px; flex: none; background: #e6e6e6; border-top: 1px solid #c6c6c6; border-bottom: 1px solid #c6c6c6; display: flex; color: #666; letter-spacing: -.06px; }
.tabs span { border-right: 1px solid #c6c6c6; padding-left: 6px; display: flex; align-items: center; white-space: nowrap; overflow: hidden; flex: none; }
.t1 { width: 131px; gap: 6px; } .tabs .t1 { padding-left: 9px; }
.t2 { width: 97px; } .t3 { width: 128px; } .t4 { width: 182px; } .t5 { width: 200px; } .t6 { width: 112px; } .t7 { width: 37px; } .t8 { width: 160px; } .t9 { width: 121px; } .t10 { width: 102px; }
.tabs .t3, .tabs .t4, .tabs .t5, .tabs .t6, .tabs .t7, .tabs .t8, .tabs .t9, .tabs .t10 { padding-left: 5px; }
.tabs .t4 { letter-spacing: -.08px; } .tabs .t8 { letter-spacing: -.22px; } .tabs .t10 { letter-spacing: -.2px; }
.tabs .on { background: #fafafa; font-weight: 600; color: #444; letter-spacing: -.15px; padding-bottom: 2px; }
.tabs .tn { width: 32px; padding-left: 9px; }
.status { height: 20px; flex: none; background: #ebebeb; display: flex; align-items: center; color: #333; font-size: 11px; letter-spacing: -.15px; padding-left: 3px; gap: 18px; }
.status > span { margin-top: -1px; }
.status .sum { margin-left: -1px; letter-spacing: .2px; }
.cells { margin-left: auto; height: 100%; display: flex; }
.cells b { border-left: 1px solid #c6c6c6; width: 27px; display: flex; align-items: center; }
.cells b:first-child { width: 127px; }
.cells b:nth-child(4) { width: 47px; }
.cells .nav { width: 71px; padding-left: 7px; }
.cells .modes { width: 68px; padding-left: 8px; }

.taskbar { height: 40px; flex: none; background: linear-gradient(90deg, #26201e 0, #2c201c 25%, #2f1f1b 55%, #321f1a 75%, #2a211d 92%, #26211f); display: flex; color: #fff; font-family: "Open Sans", sans-serif; }
.apps { display: grid; grid-template-columns: repeat(19, 49px); width: 931px; flex: none; }
.apps > svg { width: 49px; height: 40px; overflow: visible; }
.run { fill: #76dcf5; }
.ps { font: 700 11px "Open Sans"; fill: #31c5f4; }
.canva { font: italic 700 19px "Liberation Serif"; fill: #fff; }
.gt { font: 700 9px "Open Sans"; fill: #fff; }
.pdf { font: italic 800 9px "Open Sans"; fill: #111; }
.tray { margin: 0 -6px 0 58px; flex: none; }
.eng { line-height: 39px; width: 24px; font-size: 12px; letter-spacing: -.3px; }
.clock { width: 70px; margin-left: 6px; display: flex; flex-direction: column; align-items: center; line-height: 18px; padding-top: 2px; font-size: 12px; letter-spacing: -.4px; white-space: nowrap; }
.notif { margin-left: 12px; }
```
FILE: app.js
```js
const fields = ["Employer Cost", "Employer Costs...", "Employer Costs...", "Employer Costs...", "Employer Costs...",
  "Expensed Equi...", "Fuels", "Maintenance Of...", "Operating Expe...", "Other Operatin...", "Packaging Mat...",
  "Parts And Supp...", "Professional An...", "Purchases Of S...", "Rental Paymen...", "Rental Paymen...",
  "Repairs And Ma...", "Taxes And Lice...", "Transportation ...", "Water Sewer A...", "Estimation of b...", "Measure Values"];

document.getElementById("fields").innerHTML = fields.map((name, i) => {
  const cls = i === 0 ? "sel" : i > 19 ? "it" : "";
  return `<li class="${cls}"><svg width="10" height="10"><use href="#hash"/></svg><span>${name}</span></li>`;
}).join("");

const rows = [["Retail Trade", 22524], ["Accommodation and food ..", 14140], ["Food service and drinking ..", 9804],
  ["Food and beverage stores", 6275], ["Grocery stores", 5742], ["Accommodation services", 4335],
  ["General merchandise stor..", 4067], ["Health and personal care ..", 2902], ["Pharmacies and drug stor..", 2902],
  ["Other general merchandis..", 2600], ["Gas stations", 2163], ["Warehouse clubs and sup..", 1956],
  ["Motor vehicle and parts", 1889], ["Clothing and accessories ..", 1752], ["Building mat. and garden ..", 1671],
  ["Building mat. and supplie..", 1469], ["Department stores", 1467], ["Clothing stores", 1382],
  ["Automobile dealers", 1236], ["Miscellaneous store retail..", 899], ["Nonstore retailers", 850],
  ["Discount dept. stores", 789], ["Furniture stores", 760], ["Family clothing stores", 692],
  ["Department stores (excep..", 678], ["All other general merchan..", 644], ["Electronic shopping", 639],
  ["Sporting, book, and  musi..", 629], ["Auto parts and tire stores", 477], ["Electronics and appliance ..", 392],
  ["Women’s clothing stores", 328], ["Beer, wine, and liquor sto..", 302], ["Shoe stores", 236], ["Men’s clothing stores", 85]];

const steps = [[20000, "#2b5a87"], [12000, "#398fb7"], [8000, "#58abc0"], [5000, "#80c2cc"],
  [4000, "#96d0d0"], [2500, "#a3d8d3"], [1200, "#afddd7"], [0, "#bbe6da"]];

document.getElementById("names").innerHTML = rows.map(r => `<div>${r[0]}</div>`).join("");
document.getElementById("values").innerHTML = rows.map(r => `<div>${r[1].toLocaleString("en-US")}</div>`).join("");
document.getElementById("bubbles").innerHTML = rows.map(([, v], i) => {
  const color = steps.find(s => v >= s[0])[1];
  return `<circle cx="50" cy="${(5.7 + i * 12.97).toFixed(2)}" r="${(Math.sqrt(v) * 0.2552).toFixed(2)}" fill="${color}"/>`;
}).reverse().join("");
```
